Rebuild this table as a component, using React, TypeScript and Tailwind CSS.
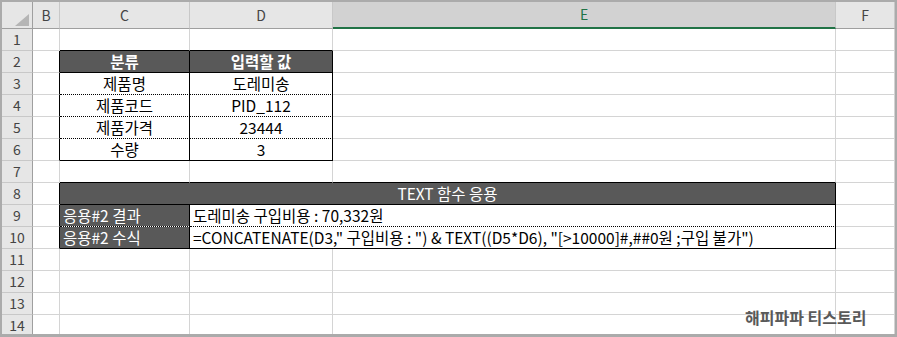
import type { ReactNode } from "react";

// 엑셀 시트 캡처 재현: 열 머리글 + 행 번호 + 두 개의 표
const FONT = "font-['Noto_Sans_CJK_KR',sans-serif]";

function Head({ children, selected = false }: { children?: ReactNode; selected?: boolean }) {
  if (selected) {
    return (
      <div className="flex items-center justify-center bg-[#d2d2d2] border-r border-b-2 border-r-[#c8c8c8] border-b-[#217346] text-[14px] text-[#217346]">
        {children}
      </div>
    );
  }
  return (
    <div className="flex items-center justify-center bg-[#e6e6e6] border-r border-b border-r-[#c8c8c8] border-b-[#9f9f9f] text-[14px] text-[#444]">
      {children}
    </div>
  );
}

function RowHead({ n }: { n: number }) {
  return (
    <div className="flex items-center justify-center bg-[#e6e6e6] border-r border-b border-r-[#9f9f9f] border-b-[#c8c8c8] text-[14px] text-[#444]">
      {n}
    </div>
  );
}

function Cell({
  r = "border-r-[#d4d4d4]",
  b = "border-b-[#d4d4d4]",
  className = "",
  children,
}: {
  r?: string;
  b?: string;
  className?: string;
  children?: ReactNode;
}) {
  return (
    <div className={`flex items-center overflow-hidden whitespace-nowrap border-r border-b bg-clip-padding ${r} ${b} ${className}`}>
      {children}
    </div>
  );
}

const BLACK_R = "border-r-black";
const BLACK_B = "border-b-black";
const DOT_B = "border-b-black [border-bottom-style:dotted]";
const DARK = "bg-[#595959] text-white";

function PlainRow({ n }: { n: number }) {
  return (
    <>
      <RowHead n={n} />
      <Cell />
      <Cell />
      <Cell />
      <Cell />
      <Cell />
    </>
  );
}

const items = [
  ["제품명", "도레미송"],
  ["제품코드", "PID_112"],
  ["제품가격", "23444"],
  ["수량", "3"],
];

export default function App() {
  return (
    <div className={`relative w-[897px] h-[337px] overflow-hidden bg-white border-t-2 border-l-2 border-r-2 border-b-[3px] border-[#ababab] ${FONT}`}>
      <div className="grid grid-cols-[31px_27px_130px_143px_503px_59px] grid-rows-[27px_repeat(14,22px)] bg-white text-[15.5px] text-black">
        {/* 머리글 */}
        <div className="flex items-end justify-end pr-[3px] pb-[2px] bg-[#e6e6e6] border-r border-b border-r-[#9f9f9f] border-b-[#9f9f9f]">
          <svg width="14" height="12" viewBox="0 0 14 12">
            <polygon points="14,0 14,12 0,12" fill="#b5b5b5" />
          </svg>
        </div>
        <Head>B</Head>
        <Head>C</Head>
        <Head>D</Head>
        <Head selected>E</Head>
        <Head>F</Head>

        {/* 1 */}
        <RowHead n={1} />
        <Cell />
        <Cell b={BLACK_B} />
        <Cell b={BLACK_B} />
        <Cell />
        <Cell />

        {/* 2 */}
        <RowHead n={2} />
        <Cell r={BLACK_R} />
        <Cell r={BLACK_R} b={BLACK_B} className={`${DARK} justify-center font-bold`}>분류</Cell>
        <Cell r={BLACK_R} b={BLACK_B} className={`${DARK} justify-center font-bold`}>입력할 값</Cell>
        <Cell />
        <Cell />

        {/* 3 ~ 6 */}
        {items.map(([k, v], i) => {
          const last = i === items.length - 1;
          return (
            <div key={k} className="contents">
              <RowHead n={i + 3} />
              <Cell r={BLACK_R} />
              <Cell r={BLACK_R} b={last ? BLACK_B : DOT_B} className="justify-center">{k}</Cell>
              <Cell r={BLACK_R} b={last ? BLACK_B : DOT_B} className="justify-center">{v}</Cell>
              <Cell />
              <Cell />
            </div>
          );
        })}

        {/* 7 */}
        <RowHead n={7} />
        <Cell />
        <Cell b={BLACK_B} />
        <Cell b={BLACK_B} />
        <Cell b={BLACK_B} />
        <Cell />

        {/* 8 */}
        <RowHead n={8} />
        <Cell r={BLACK_R} />
        <Cell r={BLACK_R} b={BLACK_B} className={`${DARK} col-span-3 justify-center`}>TEXT 함수 응용</Cell>
        <Cell />

        {/* 9 */}
        <RowHead n={9} />
        <Cell r={BLACK_R} />
        <Cell r={BLACK_R} b={DOT_B} className={`${DARK} pl-[3px]`}>응용#2 결과</Cell>
        <Cell r={BLACK_R} b={DOT_B} className="col-span-2 pl-[3px]">도레미송 구입비용 : 70,332원</Cell>
        <Cell />

        {/* 10 */}
        <RowHead n={10} />
        <Cell r={BLACK_R} />
        <Cell r={BLACK_R} b={BLACK_B} className={`${DARK} pl-[3px]`}>응용#2 수식</Cell>
        <Cell r={BLACK_R} b={BLACK_B} className="col-span-2 pl-[3px]">
          =CONCATENATE(D3," 구입비용 : ") &amp; TEXT((D5*D6), "[&gt;10000]#,##0원 ;구입 불가")
        </Cell>
        <Cell />

        <PlainRow n={11} />
        <PlainRow n={12} />
        <PlainRow n={13} />
        <PlainRow n={14} />
      </div>

      {/* 워터마크 */}
      <div className="absolute left-[743px] top-[303px] text-[16px] font-bold text-[#595959]">해피파파 티스토리</div>
    </div>
  );
}
